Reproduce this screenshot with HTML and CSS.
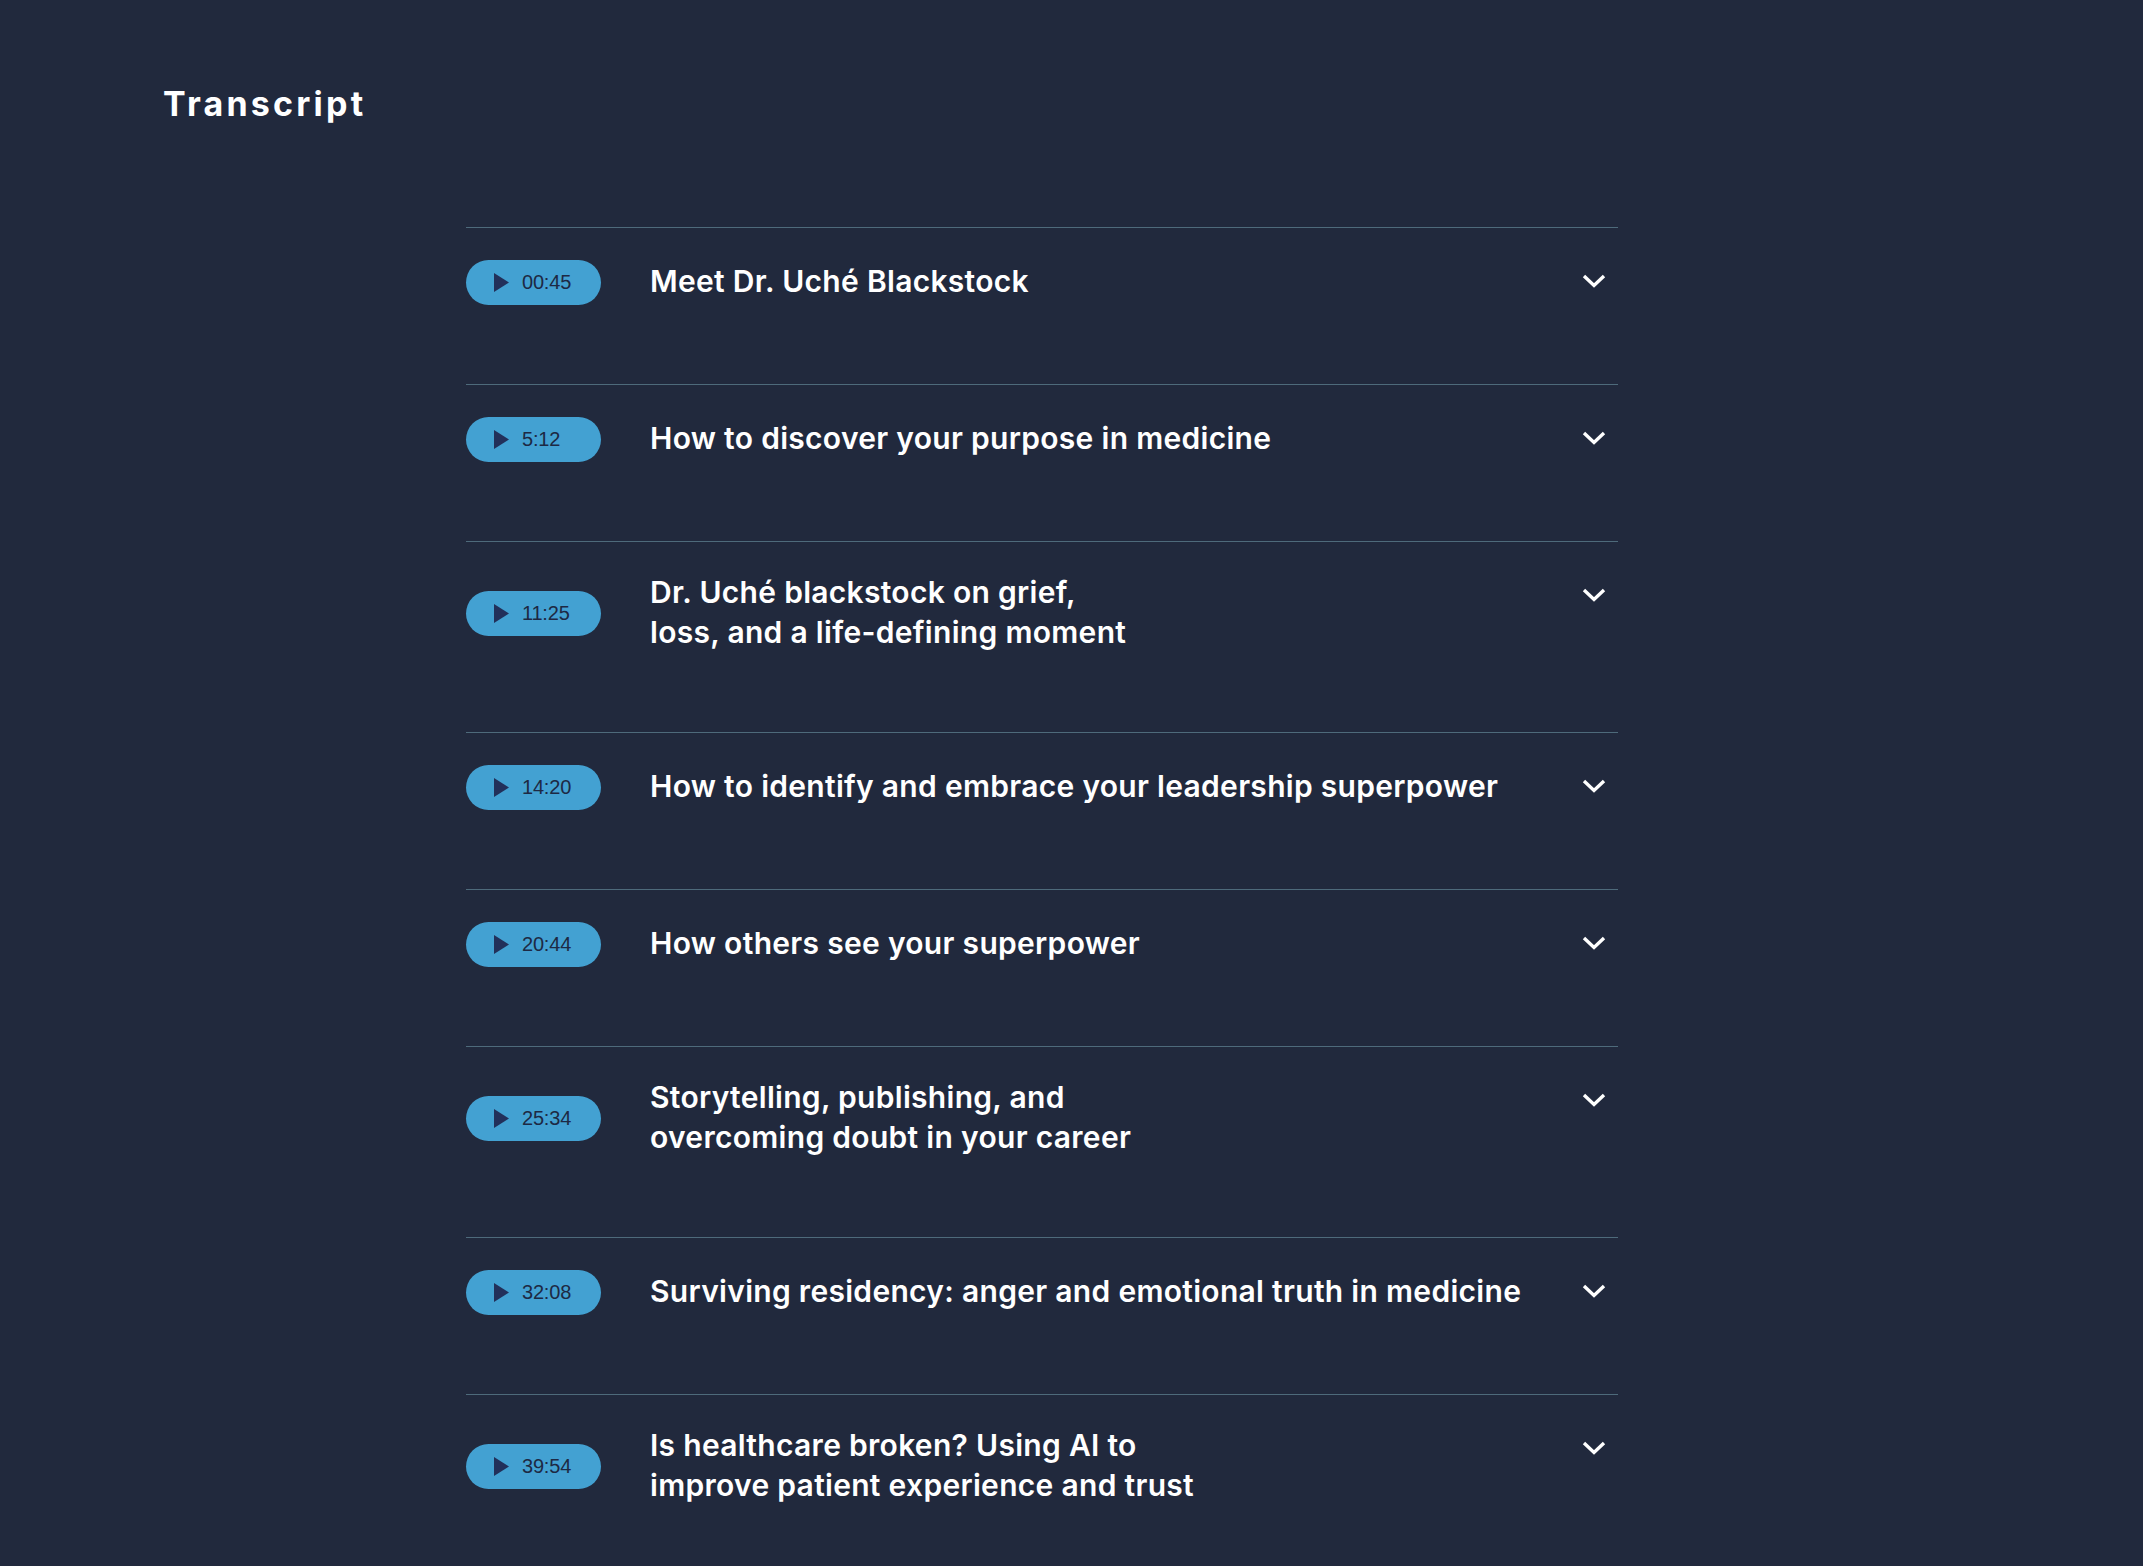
FILE: index.html
```html
<!DOCTYPE html>
<html lang="en">
<head>
<meta charset="utf-8">
<title>Transcript</title>
<link rel="stylesheet" href="styles.css">
</head>
<body>
<main class="page">
  <h1 class="page-title">Transcript</h1>
  <ul class="chapters">
    <li class="chapter">
      <button class="time"><svg class="play" viewBox="0 0 15 19"><polygon points="0,0 15,9.5 0,19"/></svg><span>00:45</span></button>
      <h2 class="chapter-title">Meet Dr. Uché Blackstock</h2>
      <svg class="chev" viewBox="0 0 24 14"><polyline points="2,2 12,11.5 22,2"/></svg>
    </li>
    <li class="chapter">
      <button class="time"><svg class="play" viewBox="0 0 15 19"><polygon points="0,0 15,9.5 0,19"/></svg><span>5:12</span></button>
      <h2 class="chapter-title">How to discover your purpose in medicine</h2>
      <svg class="chev" viewBox="0 0 24 14"><polyline points="2,2 12,11.5 22,2"/></svg>
    </li>
    <li class="chapter">
      <button class="time"><svg class="play" viewBox="0 0 15 19"><polygon points="0,0 15,9.5 0,19"/></svg><span>11:25</span></button>
      <h2 class="chapter-title">Dr. Uché blackstock on grief,<br>loss, and a life-defining moment</h2>
      <svg class="chev" viewBox="0 0 24 14"><polyline points="2,2 12,11.5 22,2"/></svg>
    </li>
    <li class="chapter">
      <button class="time"><svg class="play" viewBox="0 0 15 19"><polygon points="0,0 15,9.5 0,19"/></svg><span>14:20</span></button>
      <h2 class="chapter-title">How to identify and embrace your leadership superpower</h2>
      <svg class="chev" viewBox="0 0 24 14"><polyline points="2,2 12,11.5 22,2"/></svg>
    </li>
    <li class="chapter">
      <button class="time"><svg class="play" viewBox="0 0 15 19"><polygon points="0,0 15,9.5 0,19"/></svg><span>20:44</span></button>
      <h2 class="chapter-title">How others see your superpower</h2>
      <svg class="chev" viewBox="0 0 24 14"><polyline points="2,2 12,11.5 22,2"/></svg>
    </li>
    <li class="chapter">
      <button class="time"><svg class="play" viewBox="0 0 15 19"><polygon points="0,0 15,9.5 0,19"/></svg><span>25:34</span></button>
      <h2 class="chapter-title">Storytelling, publishing, and<br>overcoming doubt in your career</h2>
      <svg class="chev" viewBox="0 0 24 14"><polyline points="2,2 12,11.5 22,2"/></svg>
    </li>
    <li class="chapter">
      <button class="time"><svg class="play" viewBox="0 0 15 19"><polygon points="0,0 15,9.5 0,19"/></svg><span>32:08</span></button>
      <h2 class="chapter-title">Surviving residency: anger and emotional truth in medicine</h2>
      <svg class="chev" viewBox="0 0 24 14"><polyline points="2,2 12,11.5 22,2"/></svg>
    </li>
    <li class="chapter">
      <button class="time"><svg class="play" viewBox="0 0 15 19"><polygon points="0,0 15,9.5 0,19"/></svg><span>39:54</span></button>
      <h2 class="chapter-title">Is healthcare broken? Using AI to<br>improve patient experience and trust</h2>
      <svg class="chev" viewBox="0 0 24 14"><polyline points="2,2 12,11.5 22,2"/></svg>
    </li>
  </ul>
</main>
</body>
</html>
```
FILE: styles.css
```css
html, body {
  margin: 0;
  padding: 0;
  background: #21293d;
}
body {
  font-family: Inter, "Noto Sans", sans-serif;
  color: #ffffff;
  min-height: 1566px;
}
.page {
  padding: 84px 0 0 163px;
}
.page-title {
  margin: 0 0 103px 0;
  font-size: 34px;
  line-height: 40px;
  font-weight: 700;
  letter-spacing: 3.2px;
}
.chapters {
  list-style: none;
  margin: 0 0 0 303px;
  padding: 0;
  width: 1152px;
}
.chapter {
  display: flex;
  align-items: center;
  border-top: 1px solid #4e6a7b;
  padding: 30px 0 78px 0;
  min-height: 48px;
}
.time {
  flex: 0 0 auto;
  width: 135px;
  height: 45px;
  border: 0;
  border-radius: 23px;
  background: #43a1d2;
  display: flex;
  align-items: center;
  padding: 0 0 0 28px;
  margin: 0 49px 0 0;
  font-family: "Liberation Sans", Arial, sans-serif;
  font-size: 20px;
  letter-spacing: -0.2px;
  color: #1d2944;
}
.play {
  width: 15px;
  height: 19px;
  margin-right: 13px;
  fill: #22305a;
}
.chapter-title {
  flex: 1 1 auto;
  margin: 0;
  padding-bottom: 2px;
  font-size: 30px;
  line-height: 40px;
  font-weight: 600;
  letter-spacing: 0.3px;
}
.chev {
  flex: 0 0 auto;
  align-self: flex-start;
  width: 24px;
  height: 14px;
  margin: 16px 12px 0 0;
  fill: none;
  stroke: #ffffff;
  stroke-width: 3.4;
}
```
